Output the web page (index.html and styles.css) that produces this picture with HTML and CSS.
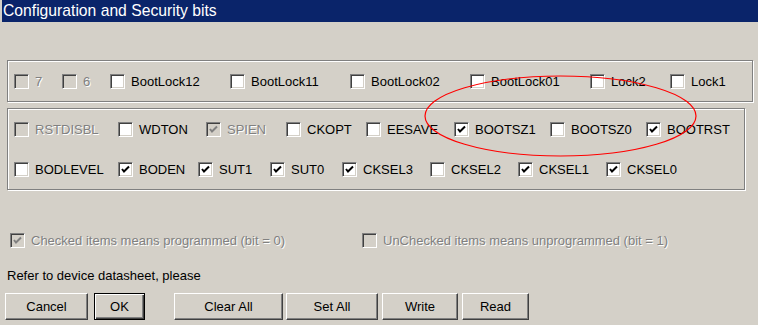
FILE: index.html
```html
<!DOCTYPE html>
<html lang="en">
<head>
    <meta charset="UTF-8">
    <title>Configuration and Security bits</title>
    <link rel="stylesheet" href="styles.css">
</head>
<body>
    <div class="window">
        <div class="titlebar">Configuration and Security bits</div>

        <div class="group group-lock">
            <div class="row row-lock">
                <label class="check disabled"><span class="box"></span>7</label>
                <label class="check disabled"><span class="box"></span>6</label>
                <label class="check"><span class="box"></span>BootLock12</label>
                <label class="check"><span class="box"></span>BootLock11</label>
                <label class="check"><span class="box"></span>BootLock02</label>
                <label class="check"><span class="box"></span>BootLock01</label>
                <label class="check"><span class="box"></span>Lock2</label>
                <label class="check"><span class="box"></span>Lock1</label>
            </div>
        </div>

        <div class="group group-fuse">
            <div class="row row-high">
                <label class="check disabled"><span class="box"></span>RSTDISBL</label>
                <label class="check"><span class="box"></span>WDTON</label>
                <label class="check disabled checked"><span class="box"><svg viewBox="0 0 15 15"><path d="M4 7 L6 9.5 L11 4.5"/></svg></span>SPIEN</label>
                <label class="check"><span class="box"></span>CKOPT</label>
                <label class="check"><span class="box"></span>EESAVE</label>
                <label class="check checked"><span class="box"><svg viewBox="0 0 15 15"><path d="M4 7 L6 9.5 L11 4.5"/></svg></span>BOOTSZ1</label>
                <label class="check"><span class="box"></span>BOOTSZ0</label>
                <label class="check checked"><span class="box"><svg viewBox="0 0 15 15"><path d="M4 7 L6 9.5 L11 4.5"/></svg></span>BOOTRST</label>
            </div>
            <div class="row row-low">
                <label class="check"><span class="box"></span>BODLEVEL</label>
                <label class="check checked"><span class="box"><svg viewBox="0 0 15 15"><path d="M4 7 L6 9.5 L11 4.5"/></svg></span>BODEN</label>
                <label class="check checked"><span class="box"><svg viewBox="0 0 15 15"><path d="M4 7 L6 9.5 L11 4.5"/></svg></span>SUT1</label>
                <label class="check checked"><span class="box"><svg viewBox="0 0 15 15"><path d="M4 7 L6 9.5 L11 4.5"/></svg></span>SUT0</label>
                <label class="check checked"><span class="box"><svg viewBox="0 0 15 15"><path d="M4 7 L6 9.5 L11 4.5"/></svg></span>CKSEL3</label>
                <label class="check"><span class="box"></span>CKSEL2</label>
                <label class="check checked"><span class="box"><svg viewBox="0 0 15 15"><path d="M4 7 L6 9.5 L11 4.5"/></svg></span>CKSEL1</label>
                <label class="check checked"><span class="box"><svg viewBox="0 0 15 15"><path d="M4 7 L6 9.5 L11 4.5"/></svg></span>CKSEL0</label>
            </div>
        </div>

        <div class="legend">
            <label class="check disabled checked"><span class="box"><svg viewBox="0 0 15 15"><path d="M4 7 L6 9.5 L11 4.5"/></svg></span>Checked items means programmed (bit = 0)</label>
            <label class="check disabled"><span class="box"></span>UnChecked items means unprogrammed (bit = 1)</label>
        </div>

        <p class="note">Refer to device datasheet, please</p>

        <div class="buttons">
            <button class="btn btn-cancel">Cancel</button>
            <button class="btn btn-ok default">OK</button>
            <button class="btn btn-clear">Clear All</button>
            <button class="btn btn-set">Set All</button>
            <button class="btn btn-write">Write</button>
            <button class="btn btn-read">Read</button>
        </div>

        <svg class="mark" width="758" height="325" viewBox="0 0 758 325">
            <ellipse cx="560.5" cy="116" rx="135.5" ry="40"/>
        </svg>
    </div>
</body>
</html>
```

FILE: styles.css
```css
body {
    margin: 0;
    background: #d4d0c8;
    font-family: "Liberation Sans", Arial, sans-serif;
    font-size: 13px;
    color: #000;
}

.window {
    position: relative;
    width: 758px;
    height: 325px;
    overflow: hidden;
}

.titlebar {
    margin-left: 2px;
    height: 22px;
    line-height: 22px;
    padding-left: 1px;
    background: #0a246a;
    color: #fff;
    font-size: 15.7px;
    white-space: nowrap;
}

/* etched group frames */
.group {
    margin-left: 7px;
    box-sizing: border-box;
    border: 1px solid #808080;
    box-shadow: inset 1px 1px 0 #fff, 1px 1px 0 #fff;
    padding-left: 6px;
}

.group-lock {
    margin-top: 38px;
    width: 746px;
    height: 42px;
}

.group-fuse {
    margin-top: 6px;
    width: 738px;
    height: 82px;
}

.row {
    display: grid;
    height: 40px;
    align-items: center;
}

.row-lock {
    grid-template-columns: 48px 48px 120px 120px 120px 120px 80px auto;
}

.row-high {
    grid-template-columns: 104px 88px 80px 80px 88px 96px 96px auto;
}

.row-low {
    grid-template-columns: 104px 80px 72px 72px 88px 88px 88px auto;
}

/* classic checkboxes */
.check {
    display: flex;
    align-items: center;
    gap: 6px;
    white-space: nowrap;
}

.box {
    flex: none;
    box-sizing: border-box;
    width: 15px;
    height: 15px;
    background: #fff;
    border: 1px solid;
    border-color: #808080 #fff #fff #808080;
    box-shadow: inset 1px 1px 0 #404040, inset -1px -1px 0 #d4d0c8;
    position: relative;
}

.box svg {
    position: absolute;
    left: -1px;
    top: -1px;
    width: 15px;
    height: 15px;
}

.box path {
    fill: none;
    stroke: #000;
    stroke-width: 2;
}

.disabled {
    color: #808080;
    text-shadow: 1px 1px 0 #fff;
}

.disabled .box {
    background: #d4d0c8;
}

.disabled .box path {
    stroke: #808080;
}

.legend {
    display: grid;
    grid-template-columns: 352px auto;
    margin-top: 43px;
    padding-left: 10px;
    height: 15px;
    align-items: center;
}

.note {
    margin: 20px 0 0 7px;
    line-height: 16px;
    height: 16px;
}

.buttons {
    display: flex;
    margin-top: 9px;
    padding-left: 5px;
}

.btn {
    box-sizing: border-box;
    height: 27px;
    padding: 0;
    background: #d4d0c8;
    font-family: "Liberation Sans", Arial, sans-serif;
    font-size: 13px;
    color: #000;
    border: 1px solid;
    border-color: #fff #404040 #404040 #fff;
    box-shadow: inset -1px -1px 0 #808080;
}

.btn.default {
    border-color: #000;
    box-shadow: inset 1px 1px 0 #fff, inset -1px -1px 0 #404040, inset -2px -2px 0 #808080;
}

.btn-cancel { width: 83px; }
.btn-ok { width: 51px; margin-left: 6px; }
.btn-clear { width: 109px; margin-left: 29px; }
.btn-set { width: 92px; margin-left: 3px; }
.btn-write { width: 76px; margin-left: 4px; }
.btn-read { width: 67px; margin-left: 4px; }

/* red annotation drawn over the dialog */
.mark {
    position: absolute;
    left: 0;
    top: 0;
    pointer-events: none;
}

.mark ellipse {
    fill: none;
    stroke: #f00;
    stroke-width: 1.2;
}
```
